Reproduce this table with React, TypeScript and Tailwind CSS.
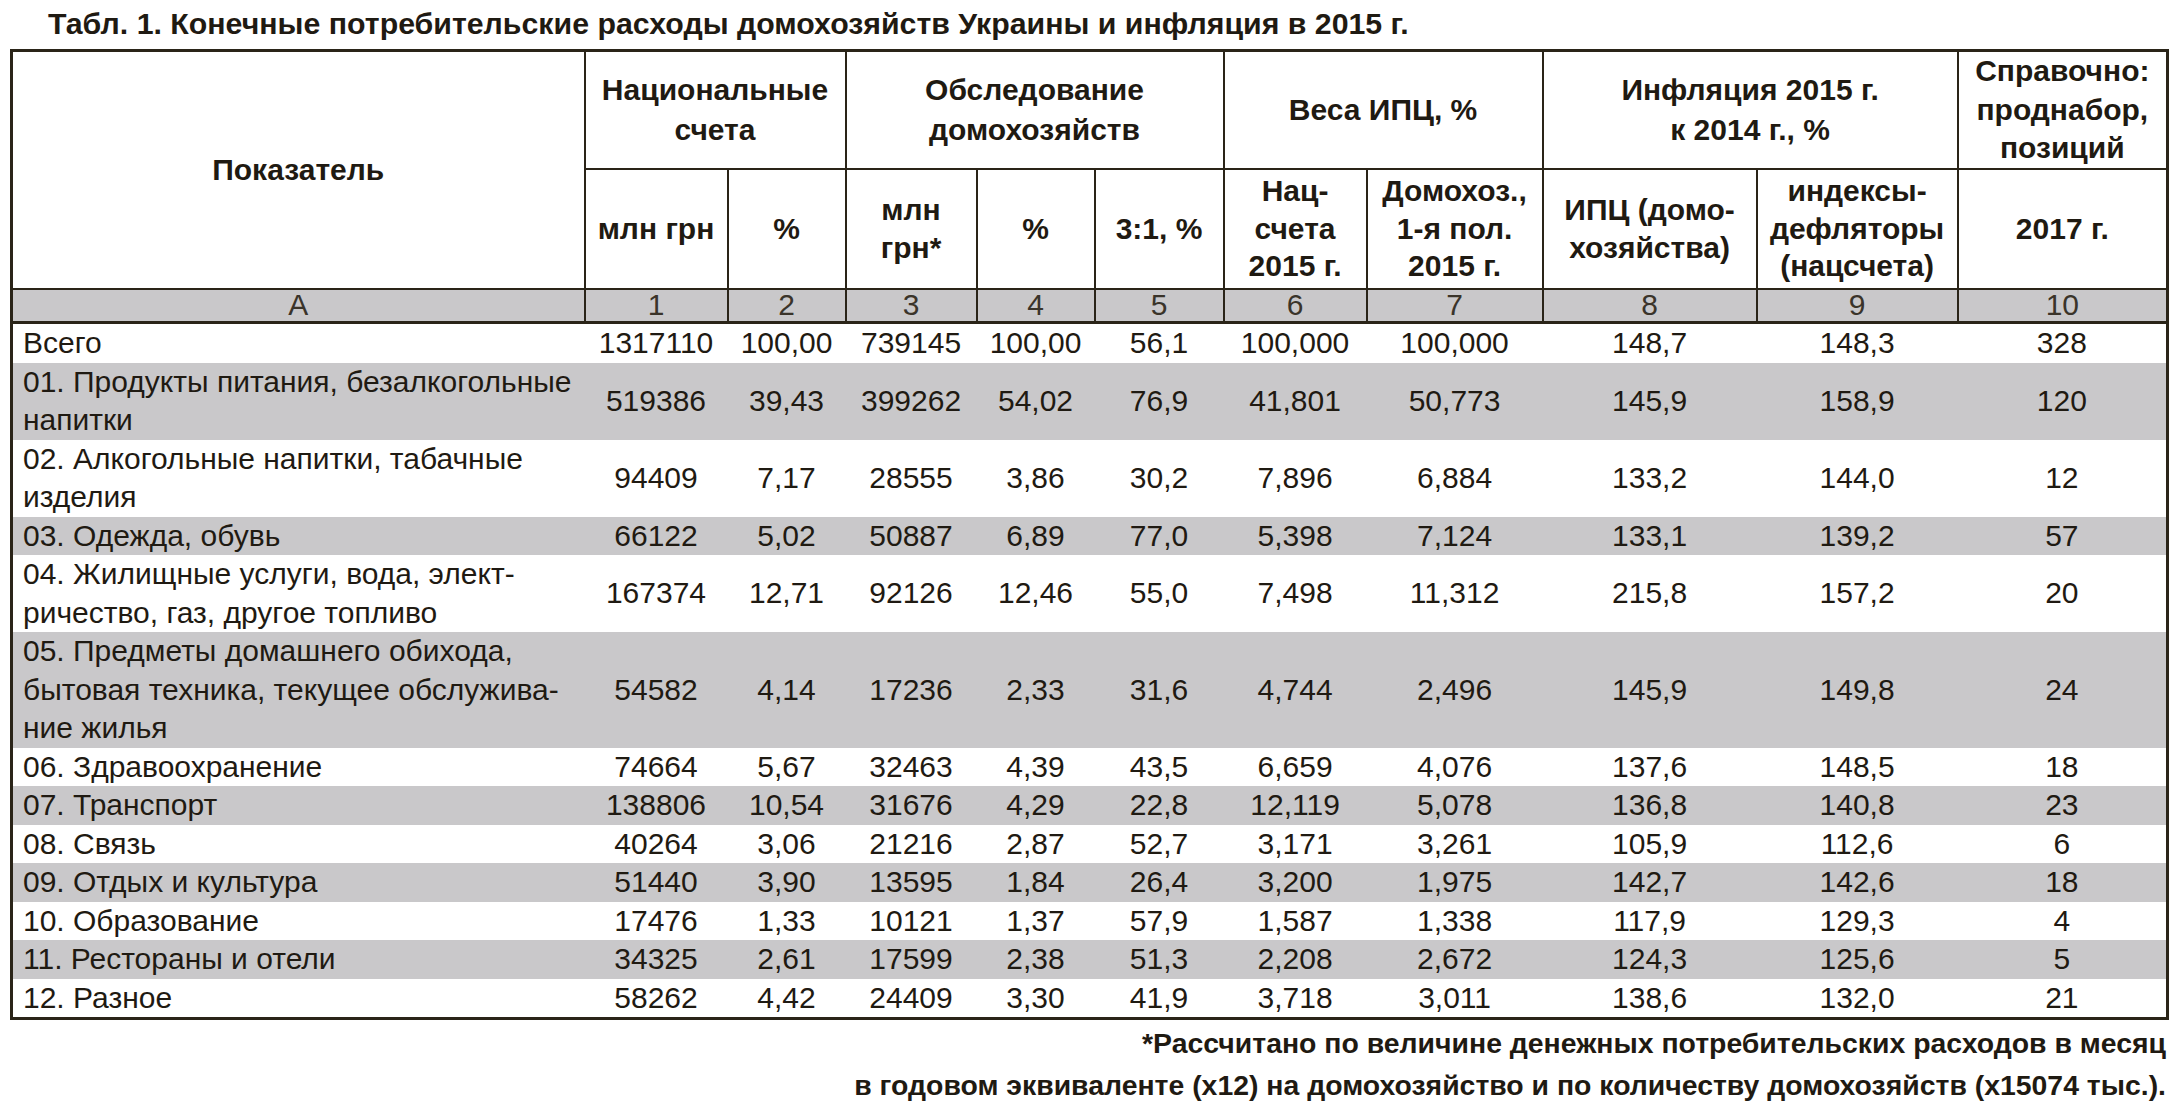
import React from "react";

const rows: { label: string[]; v: string[] }[] = [
  { label: ["Всего"], v: ["1317110", "100,00", "739145", "100,00", "56,1", "100,000", "100,000", "148,7", "148,3", "328"] },
  { label: ["01. Продукты питания, безалкогольные", "напитки"], v: ["519386", "39,43", "399262", "54,02", "76,9", "41,801", "50,773", "145,9", "158,9", "120"] },
  { label: ["02. Алкогольные напитки, табачные", "изделия"], v: ["94409", "7,17", "28555", "3,86", "30,2", "7,896", "6,884", "133,2", "144,0", "12"] },
  { label: ["03. Одежда, обувь"], v: ["66122", "5,02", "50887", "6,89", "77,0", "5,398", "7,124", "133,1", "139,2", "57"] },
  { label: ["04. Жилищные услуги, вода, элект-", "ричество, газ, другое топливо"], v: ["167374", "12,71", "92126", "12,46", "55,0", "7,498", "11,312", "215,8", "157,2", "20"] },
  { label: ["05. Предметы домашнего обихода,", "бытовая техника, текущее обслужива-", "ние жилья"], v: ["54582", "4,14", "17236", "2,33", "31,6", "4,744", "2,496", "145,9", "149,8", "24"] },
  { label: ["06. Здравоохранение"], v: ["74664", "5,67", "32463", "4,39", "43,5", "6,659", "4,076", "137,6", "148,5", "18"] },
  { label: ["07. Транспорт"], v: ["138806", "10,54", "31676", "4,29", "22,8", "12,119", "5,078", "136,8", "140,8", "23"] },
  { label: ["08. Связь"], v: ["40264", "3,06", "21216", "2,87", "52,7", "3,171", "3,261", "105,9", "112,6", "6"] },
  { label: ["09. Отдых и культура"], v: ["51440", "3,90", "13595", "1,84", "26,4", "3,200", "1,975", "142,7", "142,6", "18"] },
  { label: ["10. Образование"], v: ["17476", "1,33", "10121", "1,37", "57,9", "1,587", "1,338", "117,9", "129,3", "4"] },
  { label: ["11. Рестораны и отели"], v: ["34325", "2,61", "17599", "2,38", "51,3", "2,208", "2,672", "124,3", "125,6", "5"] },
  { label: ["12. Разное"], v: ["58262", "4,42", "24409", "3,30", "41,9", "3,718", "3,011", "138,6", "132,0", "21"] },
];

const widths = [573, 143, 118, 131, 118, 129, 143, 176, 214, 201, 210];

const th = "border-2 border-[#2a2418] text-center align-middle font-bold px-0";

export default function App() {
  return (
    <div
      className="bg-white w-[2176px] h-[1106px] text-[#1f1a12] overflow-hidden"
      style={{ fontFamily: '"Liberation Sans", Arial, sans-serif' }}
    >
      <div className="pl-[48px] pt-[7px] h-[49px] text-[30.3px] font-bold leading-[34px] whitespace-nowrap">
        Табл. 1. Конечные потребительские расходы домохозяйств Украины и инфляция в 2015 г.
      </div>
      <table className="ml-[10px] border-collapse table-fixed border-[3px] border-[#2a2418] w-[2158px] text-[30px]">
        <colgroup>
          {widths.map((w, i) => (
            <col key={i} style={{ width: w }} />
          ))}
        </colgroup>
        <thead>
          <tr className="h-[118px] leading-[40px]">
            <th rowSpan={2} className={th}>Показатель</th>
            <th colSpan={2} className={th}>Национальные<br />счета</th>
            <th colSpan={3} className={th}>Обследование<br />домохозяйств</th>
            <th colSpan={2} className={th}>Веса ИПЦ, %</th>
            <th colSpan={2} className={th}>Инфляция 2015 г.<br />к 2014 г., %</th>
            <th className={th + " leading-[38.5px]"}>Справочно:<br />проднабор,<br />позиций</th>
          </tr>
          <tr className="h-[120px] leading-[37.5px]">
            <th className={th}>млн грн</th>
            <th className={th}>%</th>
            <th className={th}>млн<br />грн*</th>
            <th className={th}>%</th>
            <th className={th}>3:1, %</th>
            <th className={th}>Нац-<br />счета<br />2015 г.</th>
            <th className={th}>Домохоз.,<br />1-я пол.<br />2015 г.</th>
            <th className={th}>ИПЦ (домо-<br />хозяйства)</th>
            <th className={th}>индексы-<br />дефляторы<br />(нацсчета)</th>
            <th className={th}>2017 г.</th>
          </tr>
          <tr className="h-[34px] bg-[#c9c8ca] leading-[30px]">
            {["А", "1", "2", "3", "4", "5", "6", "7", "8", "9", "10"].map((t, i) => (
              <td key={i} className="border-2 border-b-[3px] border-[#2a2418] text-center font-normal text-[#3a342a]">
                {t}
              </td>
            ))}
          </tr>
        </thead>
        <tbody className="leading-[38.5px]">
          {rows.map((r, ri) => (
            <tr key={ri} className={ri % 2 === 1 ? "bg-[#c9c8ca]" : "bg-white"}>
              <td className="pl-[10px] whitespace-nowrap align-middle">
                {r.label.map((l, li) => (
                  <div key={li}>{l}</div>
                ))}
              </td>
              {r.v.map((v, vi) => (
                <td key={vi} className="text-center align-middle whitespace-nowrap">
                  {v}
                </td>
              ))}
            </tr>
          ))}
        </tbody>
      </table>
      <div className="w-[2166px] text-right font-bold text-[28.4px] leading-[42px] pt-[2px] whitespace-nowrap">
        <div>*Рассчитано по величине денежных потребительских расходов в месяц</div>
        <div>в годовом эквиваленте (х12) на домохозяйство и по количеству домохозяйств (х15074 тыс.).</div>
      </div>
    </div>
  );
}
